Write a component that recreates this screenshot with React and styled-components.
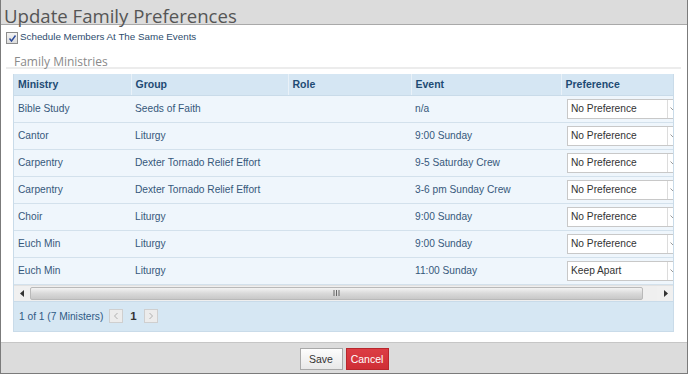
import React from "react";
import styled, { createGlobalStyle } from "styled-components";

const GlobalStyle = createGlobalStyle`
  html, body { margin: 0; padding: 0; background: #fff; }
  body { font-family: "Liberation Sans", Arial, sans-serif; }
  * { box-sizing: border-box; }
`;

const Frame = styled.div`
  width: 688px;
  height: 374px;
  border: 1px solid #7b7b7b;
  border-top: none;
  display: flex;
  flex-direction: column;
  background: #fff;
  overflow: hidden;
`;

const Header = styled.div`
  height: 25px;
  flex: none;
  background: #dcdcdc;
  border-bottom: 1px solid #a9a9a9;
  padding-left: 3px;
`;

const Title = styled.h1`
  margin: 0;
  padding-top: 4px;
  font-family: "Open Sans", sans-serif;
  font-weight: 400;
  font-size: 18.6px;
  line-height: 24px;
  color: #555;
  white-space: nowrap;
`;

const Body = styled.div`
  padding: 7px 6px 0 5px;
  flex: none;
`;

const CheckRow = styled.label`
  display: flex;
  align-items: center;
  gap: 2px;
  height: 12px;
  font-size: 9.8px;
  line-height: 10px;
  color: #2e4d6e;
`;

const CheckLabel = styled.span`
  margin-top: -2px;
`;

const CheckBox = styled.span`
  width: 12px;
  height: 12px;
  border: 1px solid #8c8c8c;
  background: linear-gradient(#f4f4f4, #dcdcdc);
  display: flex;
  align-items: center;
  justify-content: center;
`;

const SectionTitle = styled.div`
  margin-top: 12px;
  padding: 0 0 0 8px;
  font-family: "Open Sans", sans-serif;
  font-size: 12px;
  line-height: 11px;
  color: #8a8a8a;
  border-bottom: 2px solid #ececec;
`;

const GridBox = styled.div`
  margin: 5px 7px 0 7px;
  border: 1px solid #c9dbe9;
  border-top: none;
`;

const Viewport = styled.div`
  overflow: hidden;
`;

const Table = styled.table`
  width: 680px;
  table-layout: fixed;
  border-collapse: collapse;
  font-size: 10px;
`;

const HeadCell = styled.th`
  height: 21px;
  background: #d5e6f3;
  color: #1e4b74;
  font-weight: 700;
  font-size: 10.5px;
  text-align: left;
  padding: 0 0 0 4px;
  border-left: ${(p) => (p.$first ? "none" : "1px solid #e9f1f8")};
  border-bottom: 1px solid #c9dbe9;
`;

const Cell = styled.td`
  height: 27px;
  background: #eff6fc;
  color: #36587b;
  padding: 0 0 0 ${(p) => (p.$pad ? p.$pad : 4)}px;
  border-bottom: 1px solid #d3e1ec;
  white-space: nowrap;
  font-size: 10.2px;
  vertical-align: middle;
`;

const Select = styled.div`
  width: 122px;
  height: 20px;
  border: 1px solid #c8c8c8;
  background: #fff;
  display: flex;
  align-items: stretch;
  color: #333;
  font-size: 10.2px;
`;

const SelectText = styled.span`
  flex: 1;
  display: flex;
  align-items: center;
  padding-left: 3px;
`;

const SelectArrow = styled.span`
  width: 21px;
  border-left: 1px solid #dcdcdc;
  display: flex;
  align-items: center;
  padding-left: 2px;
  color: #999;
`;

const ScrollBar = styled.div`
  height: 16px;
  display: flex;
  background: #efefef;
  border-top: 1px solid #e2e2e2;
`;

const ScrollButton = styled.div`
  width: 16px;
  display: flex;
  align-items: center;
  justify-content: center;
  background: #f0f0f0;
`;

const Thumb = styled.div`
  width: 613px;
  margin: 1px 0;
  border: 1px solid #b9b9b9;
  border-radius: 2px;
  background: linear-gradient(#f3f3f3, #d9d9d9 50%, #c8c8c8);
  display: flex;
  align-items: center;
  justify-content: center;
`;

const Track = styled.div`
  flex: 1;
`;

const Pager = styled.div`
  height: 30px;
  background: #d6e7f3;
  border-top: 1px solid #c9dbe9;
  display: flex;
  align-items: center;
  padding-left: 5px;
  gap: 6px;
  color: #2f5a85;
  font-size: 10.2px;
`;

const PageButton = styled.span`
  width: 14px;
  height: 14px;
  border: 1px solid #cfcfcf;
  background: #ececec;
  display: flex;
  align-items: center;
  justify-content: center;
`;

const PageNum = styled.span`
  font-weight: 700;
  font-size: 11.5px;
  color: #333;
  padding: 0 1px;
`;

const Footer = styled.div`
  flex: 1;
  margin-top: 10px;
  background: #dcdcdc;
  border-top: 1px solid #c6c6c6;
  display: flex;
  justify-content: center;
  align-items: flex-start;
  padding-top: 5px;
  gap: 3px;
`;

const Button = styled.button`
  width: 43px;
  height: 22px;
  padding: 0;
  font-family: "Liberation Sans", Arial, sans-serif;
  font-size: 10.5px;
  border: 1px solid ${(p) => (p.$danger ? "#b8262c" : "#a9a9a9")};
  color: ${(p) => (p.$danger ? "#fff" : "#333")};
  background: ${(p) =>
    p.$danger ? "linear-gradient(#dc3d44, #cf2e35)" : "linear-gradient(#fdfdfd, #e8e8e8)"};
`;

const rows = [
  ["Bible Study", "Seeds of Faith", "", "n/a", "No Preference"],
  ["Cantor", "Liturgy", "", "9:00 Sunday", "No Preference"],
  ["Carpentry", "Dexter Tornado Relief Effort", "", "9-5 Saturday Crew", "No Preference"],
  ["Carpentry", "Dexter Tornado Relief Effort", "", "3-6 pm Sunday Crew", "No Preference"],
  ["Choir", "Liturgy", "", "9:00 Sunday", "No Preference"],
  ["Euch Min", "Liturgy", "", "9:00 Sunday", "No Preference"],
  ["Euch Min", "Liturgy", "", "11:00 Sunday", "Keep Apart"],
];

const Tri = ({ dir }) => (
  <svg width="5" height="7" viewBox="0 0 5 7">
    {dir === "left" ? <path d="M4 0 L0 3.5 L4 7 Z" fill="#333" /> : <path d="M1 0 L5 3.5 L1 7 Z" fill="#333" />}
  </svg>
);

const Chevron = ({ dir }) => (
  <svg width="6" height="8" viewBox="0 0 6 8">
    <path
      d={dir === "left" ? "M4.5 1 L1.5 4 L4.5 7" : "M1.5 1 L4.5 4 L1.5 7"}
      stroke="#b0b0b0"
      strokeWidth="1"
      fill="none"
    />
  </svg>
);

export default function App() {
  return (
    <>
      <GlobalStyle />
      <Frame>
        <Header>
          <Title>Update Family Preferences</Title>
        </Header>
        <Body>
          <CheckRow>
            <CheckBox>
              <svg width="9" height="9" viewBox="0 0 9 9">
                <path d="M1.5 4.5 L3.5 7 L7.5 1.5" stroke="#2c4a9a" strokeWidth="1.4" fill="none" />
              </svg>
            </CheckBox>
            <CheckLabel>Schedule Members At The Same Events</CheckLabel>
          </CheckRow>
          <SectionTitle>Family Ministries</SectionTitle>
          <GridBox>
            <Viewport>
              <Table>
                <colgroup>
                  <col style={{ width: 117 }} />
                  <col style={{ width: 157 }} />
                  <col style={{ width: 123 }} />
                  <col style={{ width: 150 }} />
                  <col style={{ width: 133 }} />
                </colgroup>
                <thead>
                  <tr>
                    <HeadCell $first>Ministry</HeadCell>
                    <HeadCell>Group</HeadCell>
                    <HeadCell>Role</HeadCell>
                    <HeadCell>Event</HeadCell>
                    <HeadCell>Preference</HeadCell>
                  </tr>
                </thead>
                <tbody>
                  {rows.map((r, i) => (
                    <tr key={i}>
                      <Cell>{r[0]}</Cell>
                      <Cell>{r[1]}</Cell>
                      <Cell>{r[2]}</Cell>
                      <Cell>{r[3]}</Cell>
                      <Cell $pad={6}>
                        <Select>
                          <SelectText>{r[4]}</SelectText>
                          <SelectArrow>
                            <svg width="6" height="4" viewBox="0 0 6 4">
                              <path d="M0.5 0.5 L3 3 L5.5 0.5" stroke="#999" fill="none" />
                            </svg>
                          </SelectArrow>
                        </Select>
                      </Cell>
                    </tr>
                  ))}
                </tbody>
              </Table>
            </Viewport>
            <ScrollBar>
              <ScrollButton>
                <Tri dir="left" />
              </ScrollButton>
              <Thumb>
                <svg width="7" height="6" viewBox="0 0 7 6">
                  <path d="M1 0 V6 M3.5 0 V6 M6 0 V6" stroke="#666" strokeWidth="1" />
                </svg>
              </Thumb>
              <Track />
              <ScrollButton>
                <Tri dir="right" />
              </ScrollButton>
            </ScrollBar>
            <Pager>
              <span>1 of 1 (7 Ministers)</span>
              <PageButton>
                <Chevron dir="left" />
              </PageButton>
              <PageNum>1</PageNum>
              <PageButton>
                <Chevron dir="right" />
              </PageButton>
            </Pager>
          </GridBox>
        </Body>
        <Footer>
          <Button>Save</Button>
          <Button $danger>Cancel</Button>
        </Footer>
      </Frame>
    </>
  );
}
